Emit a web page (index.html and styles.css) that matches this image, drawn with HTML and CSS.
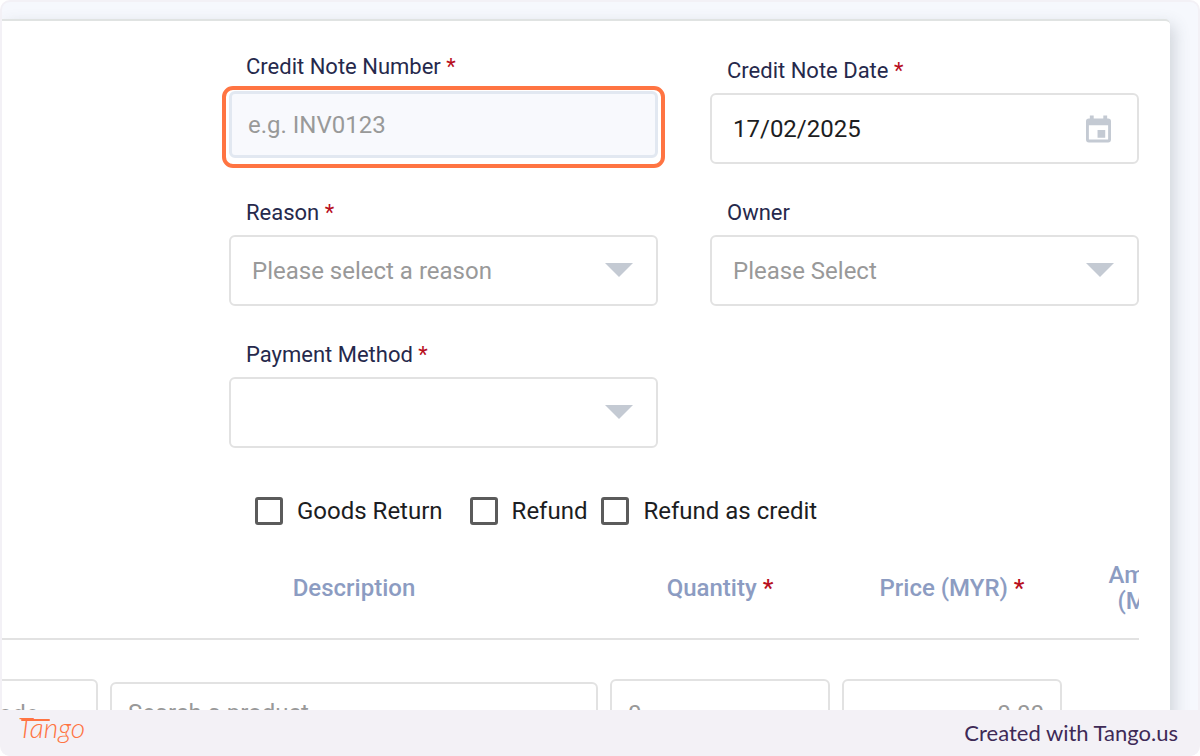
FILE: index.html
```html
<!DOCTYPE html>
<html lang="en">
<head>
<meta charset="utf-8">
<meta name="viewport" content="width=device-width, initial-scale=1">
<title>Credit Note</title>
<link rel="stylesheet" href="styles.css">
</head>
<body>
<div class="frame">
  <main class="screen">
    <form class="card">
      <div class="fields">
        <div class="field">
          <label class="label" for="number">Credit Note Number <span class="req">*</span></label>
          <div class="highlight">
            <input class="control control-focus" id="number" type="text" placeholder="e.g. INV0123">
          </div>
        </div>
        <div class="field field-date">
          <label class="label" for="date">Credit Note Date <span class="req">*</span></label>
          <div class="control-wrap">
            <input class="control" id="date" type="text" value="17/02/2025">
            <svg class="calendar" viewBox="0 0 26 28" aria-hidden="true">
              <path fill="#c4cad3" fill-rule="evenodd" d="M4 0h4v3h10V0h4v3h1a3 3 0 0 1 3 3v19a3 3 0 0 1-3 3H3a3 3 0 0 1-3-3V6a3 3 0 0 1 3-3h1zM3 10v15h20V10zM12 15h8v8h-8z"/>
            </svg>
          </div>
        </div>
        <div class="field">
          <label class="label" for="reason">Reason <span class="req">*</span></label>
          <div class="control-wrap">
            <select class="control control-select" id="reason"><option>Please select a reason</option></select>
            <svg class="caret" viewBox="0 0 28 14" aria-hidden="true"><path fill="#c4cad3" d="M0 0h28L14 14z"/></svg>
          </div>
        </div>
        <div class="field">
          <label class="label" for="owner">Owner</label>
          <div class="control-wrap">
            <select class="control control-select" id="owner"><option>Please Select</option></select>
            <svg class="caret" viewBox="0 0 28 14" aria-hidden="true"><path fill="#c4cad3" d="M0 0h28L14 14z"/></svg>
          </div>
        </div>
        <div class="field">
          <label class="label" for="method">Payment Method <span class="req">*</span></label>
          <div class="control-wrap">
            <select class="control control-select" id="method"><option></option></select>
            <svg class="caret" viewBox="0 0 28 14" aria-hidden="true"><path fill="#c4cad3" d="M0 0h28L14 14z"/></svg>
          </div>
        </div>
      </div>
      <div class="checks">
        <label class="check check-first"><input class="box" type="checkbox">Goods Return</label>
        <label class="check"><input class="box" type="checkbox">Refund</label>
        <label class="check"><input class="box" type="checkbox">Refund as credit</label>
      </div>
      <div class="lines">
        <table class="table">
          <thead>
            <tr>
              <th class="col-code"></th>
              <th>Description</th>
              <th class="col-number">Quantity <span class="req">*</span></th>
              <th class="col-number">Price (MYR) <span class="req">*</span></th>
              <th class="col-amount">Amount (MYR)</th>
            </tr>
          </thead>
          <tbody>
            <tr>
              <td><input class="control cell" type="text" placeholder="Code" aria-label="Code"></td>
              <td class="cell-product"><input class="control cell cell-short" type="text" placeholder="Search a product" aria-label="Product"></td>
              <td><input class="control cell" type="text" placeholder="0" aria-label="Quantity"></td>
              <td><input class="control cell cell-price" type="text" placeholder="0.00" aria-label="Price"></td>
              <td></td>
            </tr>
          </tbody>
        </table>
      </div>
    </form>
  </main>
  <footer class="footer">
    <svg class="logo" viewBox="0 0 72 36" role="img" aria-label="Tango">
      <path d="M4 5h27" fill="none" stroke="#ff7442" stroke-width="2" stroke-linecap="round"/>
      <text class="logo-text" x="0" y="23">Tango</text>
    </svg>
    <span>Created with Tango.us</span>
  </footer>
</div>
</body>
</html>
```
FILE: styles.css
```css
* {
  box-sizing: border-box;
}

body {
  margin: 0;
  background: #fff;
  color: #26294c;
  font-family: Roboto, "Liberation Sans", sans-serif;
}

.frame {
  display: flex;
  flex-direction: column;
  height: 100vh;
  padding: 2px 2px 0;
  overflow: hidden;
  border-radius: 10px;
  background: #f3f1f6;
}

.screen {
  flex: 1;
  min-height: 0;
  padding: 17px 28px 0 0;
  overflow: hidden;
  border-radius: 8px 8px 0 0;
  background: #f6f8fd;
}

.card {
  padding: 32px 31px 0 0;
  border-top: 2px solid #e0e3e2;
  border-radius: 0 5px 0 0;
  background: #fff;
  box-shadow: 4px 6px 16px rgba(70, 80, 90, 0.22);
}

.fields {
  display: grid;
  grid-template-columns: 1fr 1fr;
  column-gap: 52px;
  padding-left: 227px;
}

.field {
  display: flex;
  flex-direction: column;
  gap: 8px;
  padding-bottom: 35px;
}

.field-date {
  padding-top: 4px;
}

.label {
  padding-left: 17px;
  font-size: 22px;
  line-height: 28px;
}

.req {
  color: #b80f1e;
}

.highlight,
.control-wrap {
  position: relative;
}

.highlight {
  padding-top: 2px;
}

.highlight::after {
  position: absolute;
  inset: -3px -7px -10px;
  border: 4px solid #ff7442;
  border-radius: 11px;
  content: "";
  pointer-events: none;
}

.control {
  display: block;
  width: 100%;
  height: 71px;
  padding: 0 21px;
  border: 2px solid #e2e2e2;
  border-radius: 6px;
  outline: 0;
  appearance: none;
  background: #fff;
  color: #1c1d22;
  font: 24px/28px Roboto, "Liberation Sans", sans-serif;
}

.control::placeholder {
  color: #999;
  opacity: 1;
}

.control-focus {
  height: 67px;
  padding: 0 16px;
  border: 3px solid #e2e8f1;
  background: #f8f9fd;
}

.control-select {
  color: #999;
}

.calendar,
.caret {
  position: absolute;
  pointer-events: none;
}

.calendar {
  top: 22px;
  right: 28px;
  width: 25px;
  height: 28px;
}

.caret {
  top: 28px;
  right: 25px;
  width: 28px;
  height: 14px;
}

.checks {
  display: flex;
  gap: 14px;
  padding: 12px 0 0 253px;
}

.check {
  display: flex;
  align-items: center;
  gap: 14px;
  color: #1c1d22;
  font-size: 24px;
  line-height: 32px;
}

.check-first {
  margin-right: 13px;
}

.box {
  width: 28px;
  height: 28px;
  margin: 0;
  border: 3px solid #5b5b5b;
  border-radius: 3px;
  appearance: none;
}

.lines {
  padding-top: 24px;
  overflow: hidden;
}

.table {
  width: calc(100% + 138px);
  margin-left: -43px;
  table-layout: fixed;
  border-collapse: collapse;
}

.table th {
  height: 88px;
  padding: 0 34px 14px;
  border-bottom: 2px solid #e2e2e2;
  color: #8c9cc2;
  font-size: 24px;
  font-weight: 500;
  line-height: 26px;
}

.table th.col-number {
  width: 232px;
  padding: 0 0 14px;
}

.table th.col-code {
  width: 145px;
}

.table th.col-amount {
  width: 166px;
}

.table td {
  padding: 39px 6px 0;
  vertical-align: top;
}

.table .cell-product {
  padding-top: 42px;
}

.cell {
  height: 69px;
  padding: 0 16px;
}

.cell-short {
  height: 62px;
}

.cell-price {
  text-align: right;
}

.footer {
  display: flex;
  flex: none;
  align-items: center;
  justify-content: space-between;
  height: 46px;
  padding: 0 20px 0 16px;
  background: #f3f1f6;
  color: #3e2a56;
  font: 22px/28px Lato, sans-serif;
}

.logo {
  width: 72px;
  height: 36px;
}

.logo-text {
  fill: #ff7442;
  font: italic 300 28px Lato, sans-serif;
}
```
